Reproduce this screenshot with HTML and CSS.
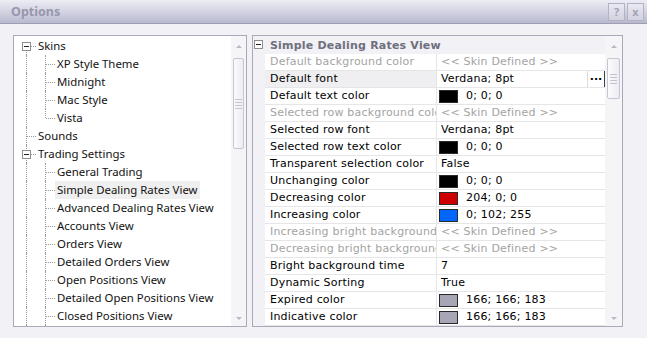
FILE: index.html
```html
<!DOCTYPE html>
<html lang="en">
<head>
    <meta charset="UTF-8">
    <title>Options</title>
    <link rel="stylesheet" href="styles.css">
</head>
<body>
    <div class="dialog">
        <div class="titlebar">
            <span class="title">Options</span>
            <div class="caption-buttons">
                <span class="cap-btn">?</span>
                <span class="cap-btn">x</span>
            </div>
        </div>

        <div class="content">
            <div class="panel tree-panel">
                <div class="tree">
                    <div class="node"><span class="cell first"><i class="box"></i></span><span class="label">Skins</span></div>
                    <div class="node"><span class="cell ln"></span><span class="cell tee"></span><span class="label">XP Style Theme</span></div>
                    <div class="node"><span class="cell ln"></span><span class="cell tee"></span><span class="label">Midnight</span></div>
                    <div class="node"><span class="cell ln"></span><span class="cell tee"></span><span class="label">Mac Style</span></div>
                    <div class="node"><span class="cell ln"></span><span class="cell elbow"></span><span class="label">Vista</span></div>
                    <div class="node"><span class="cell tee"></span><span class="label">Sounds</span></div>
                    <div class="node"><span class="cell tee"><i class="box"></i></span><span class="label">Trading Settings</span></div>
                    <div class="node"><span class="cell ln"></span><span class="cell tee"></span><span class="label">General Trading</span></div>
                    <div class="node"><span class="cell ln"></span><span class="cell tee"></span><span class="label selected">Simple Dealing Rates View</span></div>
                    <div class="node"><span class="cell ln"></span><span class="cell tee"></span><span class="label">Advanced Dealing Rates View</span></div>
                    <div class="node"><span class="cell ln"></span><span class="cell tee"></span><span class="label">Accounts View</span></div>
                    <div class="node"><span class="cell ln"></span><span class="cell tee"></span><span class="label">Orders View</span></div>
                    <div class="node"><span class="cell ln"></span><span class="cell tee"></span><span class="label">Detailed Orders View</span></div>
                    <div class="node"><span class="cell ln"></span><span class="cell tee"></span><span class="label">Open Positions View</span></div>
                    <div class="node"><span class="cell ln"></span><span class="cell tee"></span><span class="label">Detailed Open Positions View</span></div>
                    <div class="node"><span class="cell ln"></span><span class="cell tee"></span><span class="label">Closed Positions View</span></div>
                    <div class="node"><span class="cell ln"></span><span class="cell tee"></span><span class="label">Detailed Closed Positions View</span></div>
                </div>
                <div class="scrollbar">
                    <div class="arrow up"></div>
                    <div class="thumb tall"><i></i><i></i><i></i><i></i></div>
                    <div class="track-fill"></div>
                    <div class="arrow down"></div>
                </div>
            </div>

            <div class="panel grid-panel">
                <div class="grid">
                    <div class="category"><span class="gutter"><i class="box"></i></span><span class="cat-name">Simple Dealing Rates View</span></div>
                    <div class="prop disabled"><span class="gutter"></span><span class="name">Default background color</span><span class="value">&lt;&lt; Skin Defined &gt;&gt;</span></div>
                    <div class="prop current"><span class="gutter"></span><span class="name">Default font</span><span class="value">Verdana; 8pt<span class="dots">...</span></span></div>
                    <div class="prop"><span class="gutter"></span><span class="name">Default text color</span><span class="value"><span class="swatch black"></span>0; 0; 0</span></div>
                    <div class="prop disabled"><span class="gutter"></span><span class="name">Selected row background color</span><span class="value">&lt;&lt; Skin Defined &gt;&gt;</span></div>
                    <div class="prop"><span class="gutter"></span><span class="name">Selected row font</span><span class="value">Verdana; 8pt</span></div>
                    <div class="prop"><span class="gutter"></span><span class="name">Selected row text color</span><span class="value"><span class="swatch black"></span>0; 0; 0</span></div>
                    <div class="prop"><span class="gutter"></span><span class="name">Transparent selection color</span><span class="value">False</span></div>
                    <div class="prop"><span class="gutter"></span><span class="name">Unchanging color</span><span class="value"><span class="swatch black"></span>0; 0; 0</span></div>
                    <div class="prop"><span class="gutter"></span><span class="name">Decreasing color</span><span class="value"><span class="swatch red"></span>204; 0; 0</span></div>
                    <div class="prop"><span class="gutter"></span><span class="name">Increasing color</span><span class="value"><span class="swatch blue"></span>0; 102; 255</span></div>
                    <div class="prop disabled"><span class="gutter"></span><span class="name">Increasing bright background</span><span class="value">&lt;&lt; Skin Defined &gt;&gt;</span></div>
                    <div class="prop disabled"><span class="gutter"></span><span class="name">Decreasing bright background</span><span class="value">&lt;&lt; Skin Defined &gt;&gt;</span></div>
                    <div class="prop"><span class="gutter"></span><span class="name">Bright background time</span><span class="value">7</span></div>
                    <div class="prop"><span class="gutter"></span><span class="name">Dynamic Sorting</span><span class="value">True</span></div>
                    <div class="prop"><span class="gutter"></span><span class="name">Expired color</span><span class="value"><span class="swatch grey"></span>166; 166; 183</span></div>
                    <div class="prop"><span class="gutter"></span><span class="name">Indicative color</span><span class="value"><span class="swatch grey"></span>166; 166; 183</span></div>
                    <div class="prop"><span class="gutter"></span><span class="name">Unavailable color</span><span class="value"><span class="swatch grey"></span>166; 166; 183</span></div>
                </div>
                <div class="scrollbar wide">
                    <div class="arrow up"></div>
                    <div class="thumb short"><i></i><i></i><i></i><i></i></div>
                    <div class="track-fill"></div>
                    <div class="arrow down"></div>
                </div>
            </div>
        </div>
    </div>
</body>
</html>
```

FILE: styles.css
```css
body {
    margin: 0;
    background-color: #f1f1f6;
    font-family: "Noto Sans", Arial, sans-serif;
    overflow: hidden;
}
.dialog {
    width: 647px;
    height: 338px;
    background-color: #f1f1f6;
}
.titlebar {
    height: 23px;
    border-bottom: 1px solid #9d9db4;
    background: linear-gradient(#ededf5, #c9c9db 70%, #b9b9cf);
    display: flex;
    align-items: center;
    justify-content: space-between;
    padding: 0 3px 0 11px;
}
.title {
    font-weight: bold;
    font-size: 12.5px;
    color: #9797ad;
}
.caption-buttons {
    display: flex;
    gap: 2px;
}
.cap-btn {
    width: 15px;
    height: 16px;
    border: 1px solid #b3b3c6;
    background: linear-gradient(#e9e9f2, #d2d2e0);
    color: #a2a2b8;
    font-size: 11px;
    font-weight: bold;
    text-align: center;
    line-height: 15px;
}
.content {
    display: flex;
    gap: 5px;
    padding: 11px 0 0 13px;
}
.panel {
    height: 290px;
    border: 1px solid #a9a9b9;
    background-color: #fff;
    display: flex;
    overflow: hidden;
}
.tree-panel {
    width: 232px;
}
.grid-panel {
    width: 369px;
}

/* tree */
.tree {
    flex: 1;
    padding: 1px 0 0 3px;
    font-size: 11.4px;
    color: #111;
}
.node {
    display: flex;
    height: 18px;
    align-items: center;
    white-space: nowrap;
}
.cell {
    position: relative;
    width: 19px;
    height: 18px;
    flex: none;
}
.cell::before,
.cell::after {
    content: "";
    position: absolute;
}
.ln::before,
.tee::before {
    left: 9px;
    top: 0;
    height: 18px;
    border-left: 1px dotted #9a9a9a;
}
.elbow::before {
    left: 9px;
    top: 0;
    height: 9px;
    border-left: 1px dotted #9a9a9a;
}
.first::before {
    left: 9px;
    top: 9px;
    height: 9px;
    border-left: 1px dotted #9a9a9a;
}
.tee::after,
.elbow::after,
.first::after {
    left: 10px;
    top: 9px;
    width: 9px;
    border-top: 1px dotted #9a9a9a;
}
.box {
    position: absolute;
    left: 5px;
    top: 5px;
    width: 7px;
    height: 7px;
    border: 1px solid #8e8e8e;
    background-color: #fff;
    z-index: 1;
}
.box::after {
    content: "";
    position: absolute;
    left: 1px;
    top: 3px;
    width: 5px;
    border-top: 1px solid #222;
}
.label {
    padding: 0 2px;
    line-height: 18px;
}
.label.selected {
    background-color: #efefef;
}

/* scrollbars */
.scrollbar {
    width: 15px;
    flex: none;
    background-color: #f5f5f8;
    display: flex;
    flex-direction: column;
    align-items: center;
}
.scrollbar.wide {
    width: 17px;
}
.arrow {
    height: 20px;
    width: 100%;
    position: relative;
}
.arrow::after {
    content: "";
    position: absolute;
    left: 50%;
    margin-left: -3px;
    border-left: 3px solid transparent;
    border-right: 3px solid transparent;
}
.arrow.up::after {
    top: 9px;
    border-bottom: 3px solid #b9b9c6;
}
.arrow.down::after {
    bottom: 6px;
    border-top: 3px solid #b9b9c6;
}
.thumb {
    margin-top: 2px;
    width: calc(100% - 4px);
    border: 1px solid #c6c6d3;
    border-radius: 2px;
    background: linear-gradient(90deg, #fbfbfd, #ececf2);
    box-sizing: border-box;
    display: flex;
    flex-direction: column;
    justify-content: center;
    align-items: center;
    gap: 2px;
}
.thumb i {
    width: 7px;
    border-top: 1px solid #c4c4d0;
}
.thumb.tall {
    height: 91px;
}
.thumb.short {
    height: 41px;
}
.track-fill {
    flex: 1;
}

/* property grid */
.grid {
    flex: 1;
    background-color: #f1f1f6;
    font-family: "DejaVu Sans", Verdana, sans-serif;
    font-size: 11px;
    letter-spacing: 0.2px;
    color: #000;
}
.category {
    display: flex;
    height: 18px;
    align-items: center;
}
.gutter {
    position: relative;
    width: 12px;
    height: 100%;
    flex: none;
}
.category .box {
    left: 1px;
    top: 4px;
}
.cat-name {
    padding-left: 5px;
    font-weight: bold;
    color: #6f6f7d;
    white-space: nowrap;
}
.prop {
    display: flex;
    height: 17px;
    white-space: nowrap;
}
.name,
.value {
    border-bottom: 1px solid #e6e6e9;
    background-color: #fff;
    line-height: 16px;
    overflow: hidden;
}
.name {
    width: 166px;
    padding-left: 5px;
    border-right: 1px solid #e6e6e9;
}
.value {
    flex: 1;
    padding-left: 4px;
    display: flex;
    align-items: center;
    position: relative;
}
.prop.disabled {
    color: #a3a3a3;
}
.prop.current .name {
    background-color: #efeff1;
}
.swatch {
    width: 17px;
    height: 11px;
    border: 1px solid #2a2a2a;
    margin: 0 8px 0 -2px;
}
.swatch.black {
    background-color: #000;
}
.swatch.red {
    background-color: #cc0000;
}
.swatch.blue {
    background-color: #0066ff;
}
.swatch.grey {
    background-color: #a6a6b7;
}
.dots {
    position: absolute;
    right: 0;
    top: -1px;
    width: 16px;
    height: 16px;
    background-color: #fff;
    border: 1px solid #dcdcdc;
    border-right-color: #404040;
    border-bottom-color: #404040;
    font-weight: bold;
    text-align: center;
    line-height: 12px;
    letter-spacing: 0;
    color: #000;
}
```
